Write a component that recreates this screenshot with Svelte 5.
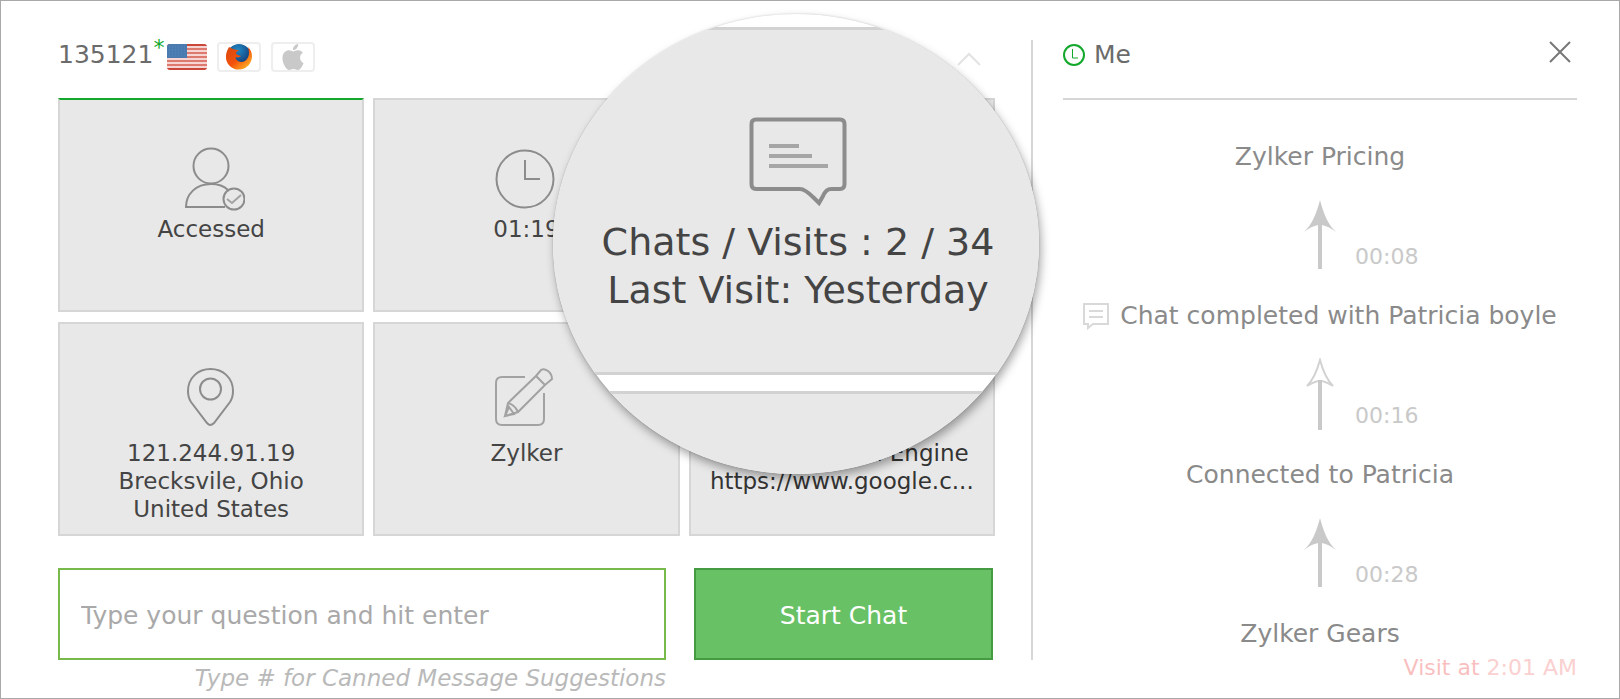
<script lang="ts">
	type Card = { icon: string; lines: string[]; active?: boolean; strong?: boolean };
	type Step = { title: string; chat?: boolean; time?: string; hollow?: boolean };

	const visitorId = '135121';

	const cards: Card[] = [
		{ icon: 'user', lines: ['Accessed'], active: true },
		{ icon: 'clock', lines: ['01:19'] },
		{ icon: '', lines: [] },
		{ icon: 'pin', lines: ['121.244.91.19', 'Brecksvile, Ohio', 'United States'] },
		{ icon: 'edit', lines: ['Zylker'] },
		{ icon: '', lines: ['Google Search Engine', 'https://www.google.c...'], strong: true },
	];

	const steps: Step[] = [
		{ title: 'Zylker Pricing', time: '00:08' },
		{ title: 'Chat completed with Patricia boyle', chat: true, time: '00:16', hollow: true },
		{ title: 'Connected to Patricia', time: '00:28' },
		{ title: 'Zylker Gears' },
	];

	let question = $state('');
</script>

<main class="window">
	<section class="visitor">
		<header class="visitor-head">
			<span class="visitor-id">{visitorId}</span>
			<span class="star">*</span>
			<svg class="flag" viewBox="0 0 40 26" role="img" aria-label="United States">
				<clipPath id="flag-clip"><rect width="40" height="26" rx="3" /></clipPath>
				<g clip-path="url(#flag-clip)">
					<rect width="40" height="26" fill="#f6d5d2" />
					{#each [1, 2, 3, 4, 5] as n}
						<rect y={n * 4} width="40" height="2" fill="#dc7a70" />
					{/each}
					<rect width="40" height="2" fill="#c9483a" />
					<rect y="24" width="40" height="2" fill="#c9483a" />
					<rect width="20" height="14" fill="#4a7bb0" />
					{#each [3, 6, 9, 12] as y}
						<path d="M2 {y}H19" stroke="#5b8aba" stroke-dasharray="1 2" />
					{/each}
				</g>
			</svg>
			<span class="badge">
				<svg width="28" height="26" viewBox="0 0 28 26" role="img" aria-label="Firefox">
					<defs>
						<radialGradient id="globe" cx=".45" cy=".25" r=".8">
							<stop offset="0" stop-color="#1f8ac6" />
							<stop offset="1" stop-color="#10225e" />
						</radialGradient>
						<linearGradient id="fox" x1="0" y1="0" x2="1" y2="1">
							<stop offset="0" stop-color="#d9480f" />
							<stop offset=".5" stop-color="#f4510b" />
							<stop offset="1" stop-color="#ffd02e" />
						</linearGradient>
					</defs>
					<circle cx="14" cy="12" r="12" fill="url(#globe)" />
					<path d="M4 3C1 8 0 13 2 18c3 6 8 8 13 7.500C22 25 27 19 27 12c0-4-2-7-4-9 1 4 2 8-1 12-2 3-6 4-9 2-2-1-3-3-2-4 2 1 4 0 5-1-2-1-5-1-5-3 0-1 2-2 3-3C10 6 7 5 4 3z" fill="url(#fox)" />
				</svg>
			</span>
			<span class="badge">
				<svg width="26" height="26" viewBox="0 0 24 24" role="img" aria-label="Apple">
					<path fill="#c9c9c9" d="M12.152 6.896c-.948 0-2.415-1.078-3.96-1.040-2.040.027-3.910 1.183-4.961 3.014-2.117 3.675-.546 9.103 1.519 12.090 1.013 1.454 2.208 3.090 3.792 3.039 1.520-.065 2.090-.987 3.935-.987 1.831 0 2.350.987 3.960.948 1.637-.026 2.676-1.480 3.676-2.948 1.156-1.688 1.636-3.325 1.662-3.415-.039-.013-3.182-1.221-3.220-4.857-.026-3.040 2.480-4.494 2.597-4.559-1.429-2.090-3.623-2.324-4.390-2.376-2-.156-3.675 1.090-4.610 1.090zM15.530 3.830c.843-1.012 1.400-2.427 1.245-3.830-1.207.052-2.662.805-3.532 1.818-.780.896-1.454 2.338-1.273 3.714 1.338.104 2.715-.688 3.559-1.701" />
				</svg>
			</span>
			<button class="collapse" aria-label="Collapse">
				<svg width="24" height="14" viewBox="0 0 24 14"><path d="M1 13 12 2l11 11" /></svg>
			</button>
		</header>

		<div class="cards">
			{#each cards as card}
				<article class="card" class:active={card.active} class:strong={card.strong}>
					<svg class="card-icon" viewBox="0 0 68 68" aria-hidden="true">
						{#if card.icon === 'user'}
							<circle cx="34" cy="22" r="17.500" />
							<path d="M48 63H9c0-13 10-23 25-23 7 0 13 2 17 6" />
							<circle cx="57" cy="55" r="10.500" />
							<path class="thin" d="m50 55 5 4 9-8" />
						{:else if card.icon === 'clock'}
							<circle cx="33" cy="35" r="28.500" />
							<path d="M33 16v19h15" />
						{:else if card.icon === 'pin'}
							<path d="M33 57c-1 0-2-1-3-2L14 34c-2-3-3-7-3-11C11 10 21 1 33.500 1S56 10 56 23c0 4-1 8-3 11L37 55c-1 1-2 2-4 2z" />
							<circle cx="33.500" cy="21" r="10.500" />
						{:else if card.icon === 'edit'}
							<path class="thin" d="M33 9H10q-6 0-6 6v36q0 6 6 6h36q6 0 6-6V25" />
							<path class="thin" d="M13 48l3-13L44 8l9 9-27 27zM16 35q7 2 10 9M13 48l4-9 5 7zM44 8l5-6q3-2 7 1t4 8l-7 6z" />
						{/if}
					</svg>
					{#each card.lines as line}
						<p>{line}</p>
					{/each}
				</article>
			{/each}
		</div>

		<form class="ask" onsubmit={(e) => e.preventDefault()}>
			<input
				type="text"
				aria-label="Your question"
				placeholder="Type your question and hit enter"
				bind:value={question}
			/>
			<button type="submit">Start Chat</button>
			<small>Type # for Canned Message Suggestions</small>
		</form>

		<div class="lens">
			<div class="lens-card">
				<svg width="98" height="92" viewBox="0 0 98 92" aria-hidden="true">
					<path d="M7 2.500h84q4.500 0 4.500 4.500v60q0 5-4.500 5H82q-5 0-8 7l-4 7-5-5q-9-9-14-9H7q-4.500 0-4.500-5V7q0-4.500 4.500-4.500z" />
					<path class="text-lines" d="M20 29h30M20 39h43M20 49h59" />
				</svg>
				<p>Chats / Visits : 2 / 34</p>
				<p>Last Visit: Yesterday</p>
			</div>
			<div class="lens-next"></div>
		</div>
	</section>

	<div class="divider"></div>

	<aside class="history">
		<header class="history-head">
			<svg width="22" height="22" viewBox="0 0 22 22" aria-hidden="true">
				<circle cx="11" cy="11" r="10" />
				<path class="hands" d="M9.500 5v9H15" />
			</svg>
			<h2>Me</h2>
			<button aria-label="Close">
				<svg width="22" height="22" viewBox="0 0 22 22"><path d="m1 1 20 20M21 1 1 21" /></svg>
			</button>
		</header>

		<ol>
			{#each steps as step}
				<li>
					<div class="step-title">
						{#if step.chat}
							<svg width="26" height="28" viewBox="0 0 26 28" aria-hidden="true">
								<path d="M1 2h24v20H10l-5 4v-4H1zM6 9h14M6 15h14" />
							</svg>
						{/if}
						<span>{step.title}</span>
					</div>
					{#if step.time}
						<div class="step-gap">
							<svg width="34" height="72" viewBox="0 0 34 72" aria-hidden="true">
								{#if step.hollow}
									<path class="outline" d="M17 2c3 11 7 20 13 26q-8-5-13-5-5 0-13 5C10 22 14 13 17 2z" />
									<path class="stem" d="M17 22v50" />
								{:else}
									<path class="head" d="M17 1c3 12 8 25 16 32-7-5-11-7-16-7s-9 2-16 7C9 26 14 13 17 1z" />
									<path class="stem" d="M17 24v46" />
								{/if}
							</svg>
							<time>{step.time}</time>
						</div>
					{/if}
				</li>
			{/each}
		</ol>
		<p class="visit">Visit at <span>2:01 AM</span></p>
	</aside>
</main>

<style>
	:global(body) {
		margin: 0;
		background: #fff;
	}

	.window {
		box-sizing: border-box;
		min-height: 100vh;
		display: flex;
		padding: 39px 42px 2px 57px;
		border: 1px solid #a9a9a9;
		overflow: hidden;
		font-family: 'DejaVu Sans', sans-serif;
		font-size: 25px;
		line-height: 28px;
		color: #444;
	}

	p,
	h2,
	ol {
		margin: 0;
		padding: 0;
		font-weight: 400;
	}

	svg {
		display: block;
		flex: none;
		fill: none;
	}

	button {
		font: inherit;
		padding: 0;
		border: 0;
		background: none;
		cursor: pointer;
	}

	.visitor {
		position: relative;
		flex: 937 1 0;
		min-width: 0;
	}

	.visitor-head {
		display: flex;
		align-items: flex-start;
		height: 58px;
		padding-right: 14px;
		box-sizing: border-box;
		color: #6b6b6b;
	}

	.visitor-id {
		line-height: 30px;
	}

	.star {
		width: 14px;
		font-size: 22px;
		line-height: 16px;
		color: #13a82b;
	}

	.flag {
		width: 40px;
		height: 26px;
		margin-top: 4px;
	}

	.badge {
		display: flex;
		justify-content: center;
		width: 40px;
		height: 26px;
		margin: 2px 0 0 10px;
		border: 2px solid #eee;
		border-radius: 4px;
	}

	.collapse {
		margin: 12px 0 0 auto;
	}

	.collapse path {
		stroke: #e3e3e3;
		stroke-width: 2;
	}

	.cards {
		display: grid;
		grid-template-columns: repeat(3, minmax(0, 1fr));
		gap: 10px 9px;
	}

	.card {
		box-sizing: border-box;
		min-height: 214px;
		padding-top: 44px;
		border: 2px solid #d6d6d6;
		background: #e8e8e8;
		font-size: 23px;
		text-align: center;
	}

	.card.active {
		border-top-color: #13a82b;
	}

	.card-icon {
		width: 68px;
		height: 68px;
		margin: 0 auto 3px;
		stroke: #8c8c8c;
		stroke-width: 2;
	}

	.card-icon circle {
		fill: #e8e8e8;
	}

	.card.strong {
		color: #333;
	}

	.thin {
		stroke: #a2a2a2;
	}

	.ask {
		display: grid;
		grid-template-columns: 608fr 299fr;
		column-gap: 28px;
		margin-top: 32px;
		padding-right: 2px;
	}

	.ask input {
		box-sizing: border-box;
		min-width: 0;
		height: 92px;
		padding: 2px 21px 0;
		border: 2px solid #78b94c;
		background: #fff;
		font: inherit;
		color: #444;
	}

	.ask input::placeholder {
		color: #a9a9a9;
		opacity: 1;
	}

	.ask button {
		padding-top: 4px;
		border: 2px solid #459b42;
		background: #69c165;
		color: #fff;
	}

	.ask small {
		font-size: 23px;
		line-height: 36px;
		font-style: italic;
		text-align: right;
		white-space: nowrap;
		color: #b9b9b9;
	}

	.lens {
		position: absolute;
		top: -26px;
		right: -44px;
		display: flex;
		flex-direction: column;
		gap: 16px;
		box-sizing: border-box;
		width: 486px;
		height: 460px;
		padding-top: 13px;
		border-radius: 50%;
		overflow: hidden;
		background: #fff;
		box-shadow: 2px 5px 10px rgba(0, 0, 0, 0.35), 0 0 2px rgba(0, 0, 0, 0.2);
		font-size: 38px;
		line-height: 48px;
		text-align: center;
		white-space: nowrap;
	}

	.lens-card {
		box-sizing: border-box;
		height: 348px;
		padding: 87px 0 0 4px;
		border: solid #d2d2d2;
		border-width: 3px 0;
		background: #e8e8e8;
	}

	.lens-card svg {
		margin: 0 auto 9px;
		stroke: #8c8c8c;
		stroke-width: 4;
	}

	.lens-card .text-lines {
		stroke: #a6a6a6;
	}

	.lens-next {
		flex: 1;
		border-top: 3px solid #d2d2d2;
		background: #e8e8e8;
	}

	.divider {
		width: 2px;
		margin: 0 30px 36px 36px;
		background: #d6d6d6;
	}

	.history {
		flex: 514 1 0;
		min-width: 0;
		color: #8a8a8a;
	}

	.history-head {
		display: flex;
		align-items: flex-start;
		height: 58px;
		border-bottom: 2px solid #d6d6d6;
	}

	.history-head svg {
		margin-top: 4px;
		stroke: #13a82b;
		stroke-width: 2;
	}

	.history-head .hands {
		stroke-width: 1;
	}

	.history-head h2 {
		margin-left: 9px;
		font-size: 25px;
		line-height: 30px;
		color: #6b6b6b;
	}

	.history-head button {
		margin: 0 6px 0 auto;
	}

	.history-head button svg {
		margin-top: 1px;
		stroke: #777;
	}

	ol {
		margin-top: 38px;
		list-style: none;
	}

	.step-title {
		display: flex;
		justify-content: center;
		align-items: center;
		gap: 11px;
		line-height: 38px;
		white-space: nowrap;
	}

	.step-title svg {
		stroke: #d9d9d9;
		stroke-width: 2;
	}

	.step-gap {
		display: grid;
		grid-template-columns: 1fr 34px 1fr;
		column-gap: 18px;
		align-items: end;
		height: 95px;
		padding-bottom: 26px;
	}

	.step-gap svg {
		grid-column: 2;
	}

	.step-gap time {
		font-size: 22px;
		color: #c9c9c9;
	}

	.head {
		fill: #c9c9c9;
	}

	.stem {
		stroke: #c9c9c9;
		stroke-width: 4;
	}

	.outline {
		stroke: #d2d2d2;
		stroke-width: 2;
	}

	.visit {
		margin-top: 1px;
		font-size: 22px;
		text-align: right;
		color: #f9bfbf;
	}

	.visit span {
		color: #fad0d0;
	}
</style>
